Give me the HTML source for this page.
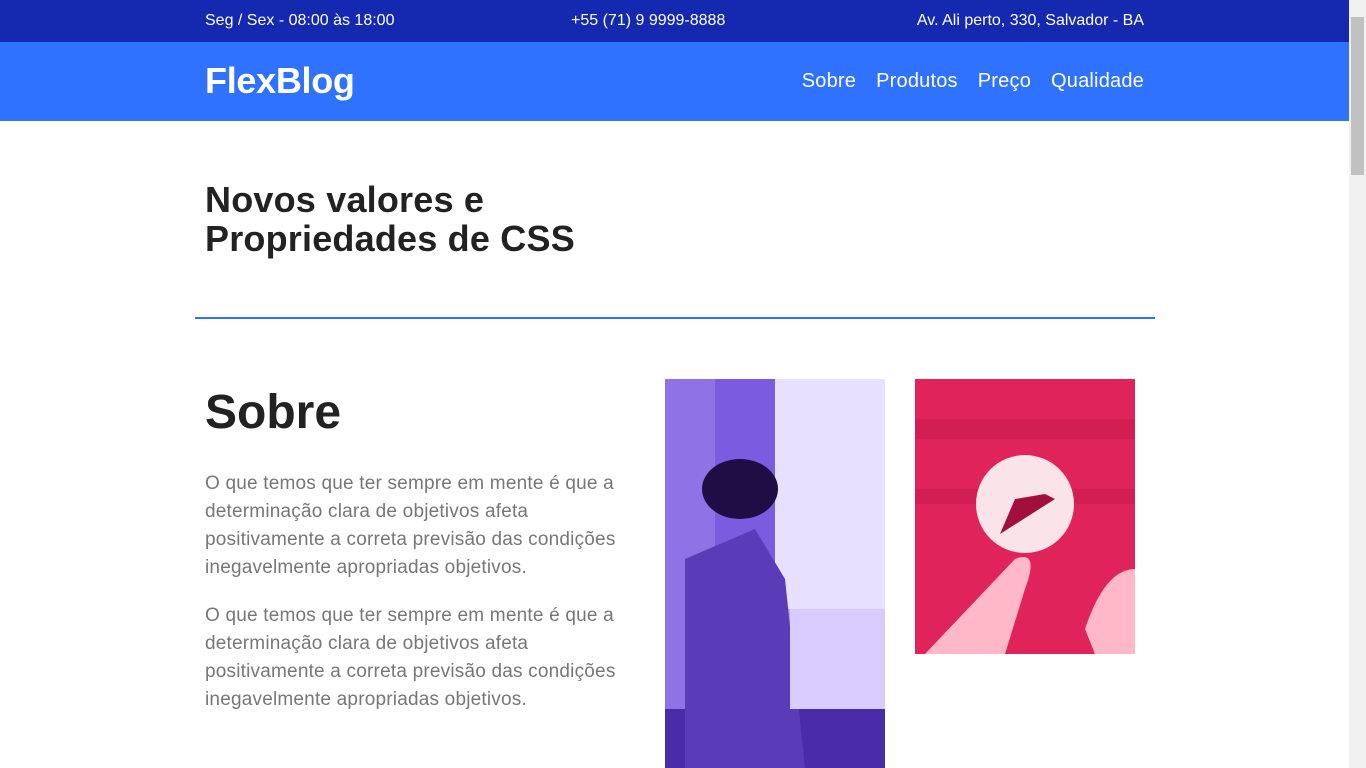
<!DOCTYPE html>
<html><head><meta charset="utf-8"><style>
*{margin:0;padding:0;box-sizing:border-box}
html,body{width:1366px;height:768px;overflow:hidden;background:#fff;font-family:"Liberation Sans",sans-serif}
.top{position:absolute;left:0;top:0;width:1349px;height:42px;background:#1428b0;color:#fff;font-size:16px}
.top span{position:absolute;top:12px}
.nav{position:absolute;left:0;top:42px;width:1349px;height:79px;background:#2e72ff;color:#fff}
.logo{position:absolute;left:205px;top:18px;font-size:36px;font-weight:bold;letter-spacing:-0.3px}
.menu{position:absolute;right:205px;top:28px;font-size:20px;letter-spacing:0.2px}
.menu a{margin-left:20px}
h1{position:absolute;left:205px;top:180px;font-size:36px;line-height:39px;color:#222;font-weight:bold;letter-spacing:0.2px}
.hr{position:absolute;left:195px;top:317px;width:960px;height:2px;background:#2e72ff}
h2{position:absolute;left:205px;top:385px;font-size:48px;color:#222;font-weight:bold}
p{position:absolute;left:205px;width:430px;font-size:19px;line-height:28px;color:#777;letter-spacing:0.2px}
.sb{position:absolute;left:1349px;top:0;width:17px;height:768px;background:#f1f1f1}
.th{position:absolute;left:1351px;top:17px;width:13px;height:158px;background:#c1c1c1}
</style></head><body>
<div class="top"><span style="left:205px">Seg / Sex - 08:00 às 18:00</span><span style="left:571px">+55 (71) 9 9999-8888</span><span style="right:205px">Av. Ali perto, 330, Salvador - BA</span></div>
<div class="nav"><div class="logo">FlexBlog</div><div class="menu"><a>Sobre</a><a>Produtos</a><a>Preço</a><a>Qualidade</a></div></div>
<h1>Novos valores e<br>Propriedades de CSS</h1>
<div class="hr"></div>
<h2>Sobre</h2>
<p style="top:470px">O que temos que ter sempre em mente é que a determinação clara de objetivos afeta positivamente a correta previsão das condições inegavelmente apropriadas objetivos.</p>
<p style="top:602px">O que temos que ter sempre em mente é que a determinação clara de objetivos afeta positivamente a correta previsão das condições inegavelmente apropriadas objetivos.</p>
<svg style="position:absolute;left:665px;top:379px" width="220" height="389">
<rect width="220" height="389" fill="#b9a6f5"/>
<rect x="0" y="0" width="110" height="389" fill="#8f72e6"/>
<rect x="50" y="0" width="60" height="200" fill="#7b5ce0"/>
<rect x="110" y="0" width="110" height="230" fill="#e8e0ff"/>
<rect x="0" y="330" width="220" height="59" fill="#4a2ca8"/>
<polygon points="20,180 90,150 120,200 140,389 20,389" fill="#5a3cb8"/>
<ellipse cx="75" cy="110" rx="38" ry="30" fill="#1e0e45"/>
<rect x="125" y="230" width="95" height="100" fill="#d8ccff"/>
</svg>
<svg style="position:absolute;left:915px;top:379px" width="220" height="275">
<rect width="220" height="275" fill="#e0245a"/>
<rect y="40" width="220" height="20" fill="#c81a4c" opacity=".6"/>
<rect y="110" width="220" height="15" fill="#c81a4c" opacity=".6"/>
<circle cx="110" cy="125" r="49" fill="#fbe3ea"/>
<polygon points="85,155 100,120 130,115 140,120" fill="#a0103a"/>
<path d="M10,275 L100,180 Q125,170 110,210 L90,275Z" fill="#ffb8c8"/>
<path d="M170,250 Q190,190 220,190 L220,275 L180,275Z" fill="#ffb8c8"/>
</svg>
<div class="sb"></div><div class="th"></div>
</body></html>
